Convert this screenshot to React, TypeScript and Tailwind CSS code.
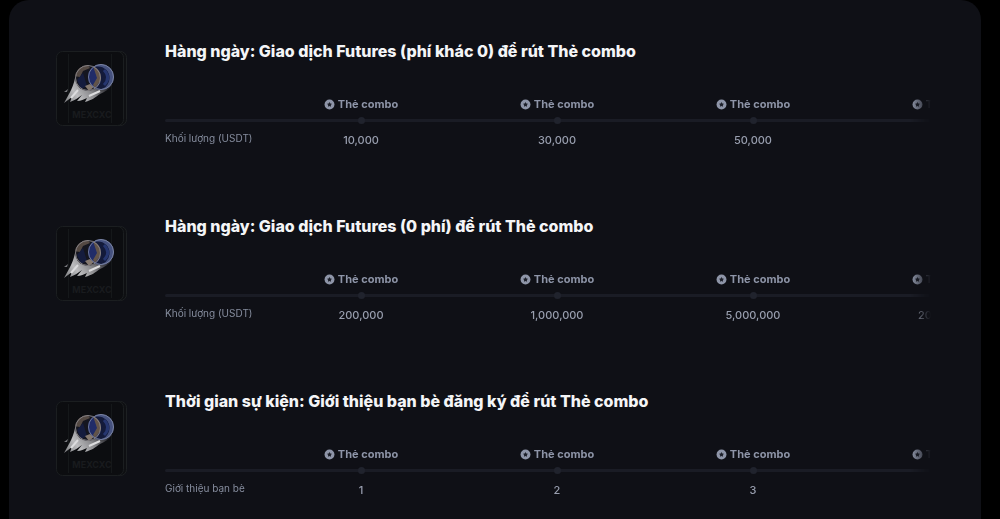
import { useId } from "react";

const tasks = [
  {
    title: "Hàng ngày: Giao dịch Futures (phí khác 0) để rút Thẻ combo",
    unit: "Khối lượng (USDT)",
    steps: ["10,000", "30,000", "50,000", ""],
  },
  {
    title: "Hàng ngày: Giao dịch Futures (0 phí) để rút Thẻ combo",
    unit: "Khối lượng (USDT)",
    steps: ["200,000", "1,000,000", "5,000,000", "20,000,000"],
  },
  {
    title: "Thời gian sự kiện: Giới thiệu bạn bè đăng ký để rút Thẻ combo",
    unit: "Giới thiệu bạn bè",
    steps: ["1", "2", "3", ""],
  },
];

function CoinIcon() {
  return (
    <svg viewBox="0 0 12 12" className="h-[11px] w-[11px] shrink-0" aria-hidden="true">
      <circle cx="6" cy="6" r="5.4" fill="#8e95a8" />
      <path d="M6 3.200 6.900 4.900 8.700 5.200 7.500 6.600 7.700 8.400 6 7.700 4.300 8.400 4.500 6.600 3.300 5.200 5.100 4.900Z" fill="#1d202a" />
    </svg>
  );
}

function CardArt() {
  const id = useId();
  return (
    <svg viewBox="0 0 72 76" className="mt-3 h-[76px] w-[72px] shrink-0" aria-hidden="true">
      <defs>
        <linearGradient id={`${id}trail`} x1="8" y1="52" x2="42" y2="26" gradientUnits="userSpaceOnUse">
          <stop offset="0" stopColor="#77787b" />
          <stop offset="0.35" stopColor="#bcbcbe" />
          <stop offset="0.65" stopColor="#8a8a8d" />
          <stop offset="1" stopColor="#2a2a30" />
        </linearGradient>
        <clipPath id={`${id}front`}>
          <circle cx="32" cy="27" r="13" />
        </clipPath>
        <clipPath id={`${id}back`}>
          <circle cx="45" cy="26" r="13" />
        </clipPath>
      </defs>
      <rect x="3.5" y="0.5" width="67" height="74" rx="6" fill="#0e0f12" stroke="#1d2022" />
      <rect x="0.5" y="0.5" width="67" height="74" rx="6" fill="#0c0d10" stroke="#1b1e20" />
      <path d="M12.500 3V72M55.500 3V72" stroke="#15181a" />
      <path
        d="M19 27C18 32 16 38 13 43L8 52 16 46 14 51C19 49 22 47 26 44L21 50C25 50 28 48 31 47L29 51C36 49 40 46 44 43 49 41 53 38 56 34L45 26Z"
        fill={`url(#${id}trail)`}
      />
      <path d="m15 47 7-8M33 45l11-5" stroke="#dcdcde" strokeWidth="2" />
      <path d="m8 41 4-3-1 3Z" fill="#77787c" />
      <g clipPath={`url(#${id}back)`}>
        <circle cx="45" cy="26" r="13" fill="#46527f" />
        <circle cx="42" cy="27" r="11.500" fill="#131a3a" />
        <path d="M48 19c5 5 5 10 0 15" fill="none" stroke="#26366f" strokeWidth="3" />
      </g>
      <circle cx="45" cy="26" r="12.500" fill="none" stroke="#7b84a2" />
      <g clipPath={`url(#${id}front)`}>
        <circle cx="32" cy="27" r="13" fill="#15161f" />
        <path d="M18 25 22 17 31 13 34 17 27 20 24 26Z" fill="#544943" />
        <path d="M21 29 27 22 31 35 25 38Z" fill="#151c3d" />
        <circle cx="45" cy="26" r="13" fill="#202c68" />
        <path d="M37 15 45 19 45 29 39 37 37 34 41 27Z" fill="#625449" />
        <path d="m29 35 5-2 4 3-5 4Z" fill="#85796f" />
        <circle cx="45" cy="26" r="12.500" fill="none" stroke="#6f799b" />
      </g>
      <circle cx="32" cy="27" r="12.500" fill="none" stroke="#858184" />
      <text
        x="36"
        y="67"
        textAnchor="middle"
        fill="#191b1e"
        className="font-['Inter',sans-serif] text-[9px] font-bold"
      >
        MEXCXC
      </text>
    </svg>
  );
}

function TaskRow({ title, unit, steps }: (typeof tasks)[number]) {
  return (
    <section className="flex h-[175px] gap-[37px]">
      <CardArt />
      <div className="min-w-0 flex-1">
        <h2 className="text-[16px] leading-6 font-extrabold whitespace-nowrap text-[#f4f5f7]">{title}</h2>
        <div className="mt-[31px] flex overflow-hidden [mask-image:linear-gradient(to_right,#000_calc(100%-20px),transparent)]">
          <div className="flex w-[98px] shrink-0 flex-col">
            <div className="mt-[25px] h-[3px] rounded-l-full bg-[#1a1c25]" />
            <span className="mt-1.5 text-[10px] leading-5 whitespace-nowrap text-[#868d9e]">{unit}</span>
          </div>
          {steps.map((value, i) => (
            <div key={i} className="flex w-[196px] shrink-0 flex-col">
              <div className="flex h-5 items-center justify-center gap-[3px] text-[11px] font-bold text-[#8e95a8]">
                <CoinIcon />
                <span>Thẻ combo</span>
              </div>
              <div className="mt-[5px] flex h-[3px] items-center justify-center bg-[#1a1c25]">
                <span className="h-[7px] w-[7px] shrink-0 rounded-full bg-[#20232d]" />
              </div>
              <span className="mt-2 h-5 text-center text-[11px] leading-5 font-medium text-[#989eae]">{value}</span>
            </div>
          ))}
        </div>
      </div>
    </section>
  );
}

export default function App() {
  return (
    <div className="min-h-screen bg-black pr-[19px] pl-[9px] font-['Inter','Noto_Sans',sans-serif]">
      <main className="min-h-screen rounded-t-[20px] bg-[#0f1016] pt-[39px] pr-[50px] pl-[47px]">
        {tasks.map((task) => (
          <TaskRow key={task.title} {...task} />
        ))}
      </main>
    </div>
  );
}
